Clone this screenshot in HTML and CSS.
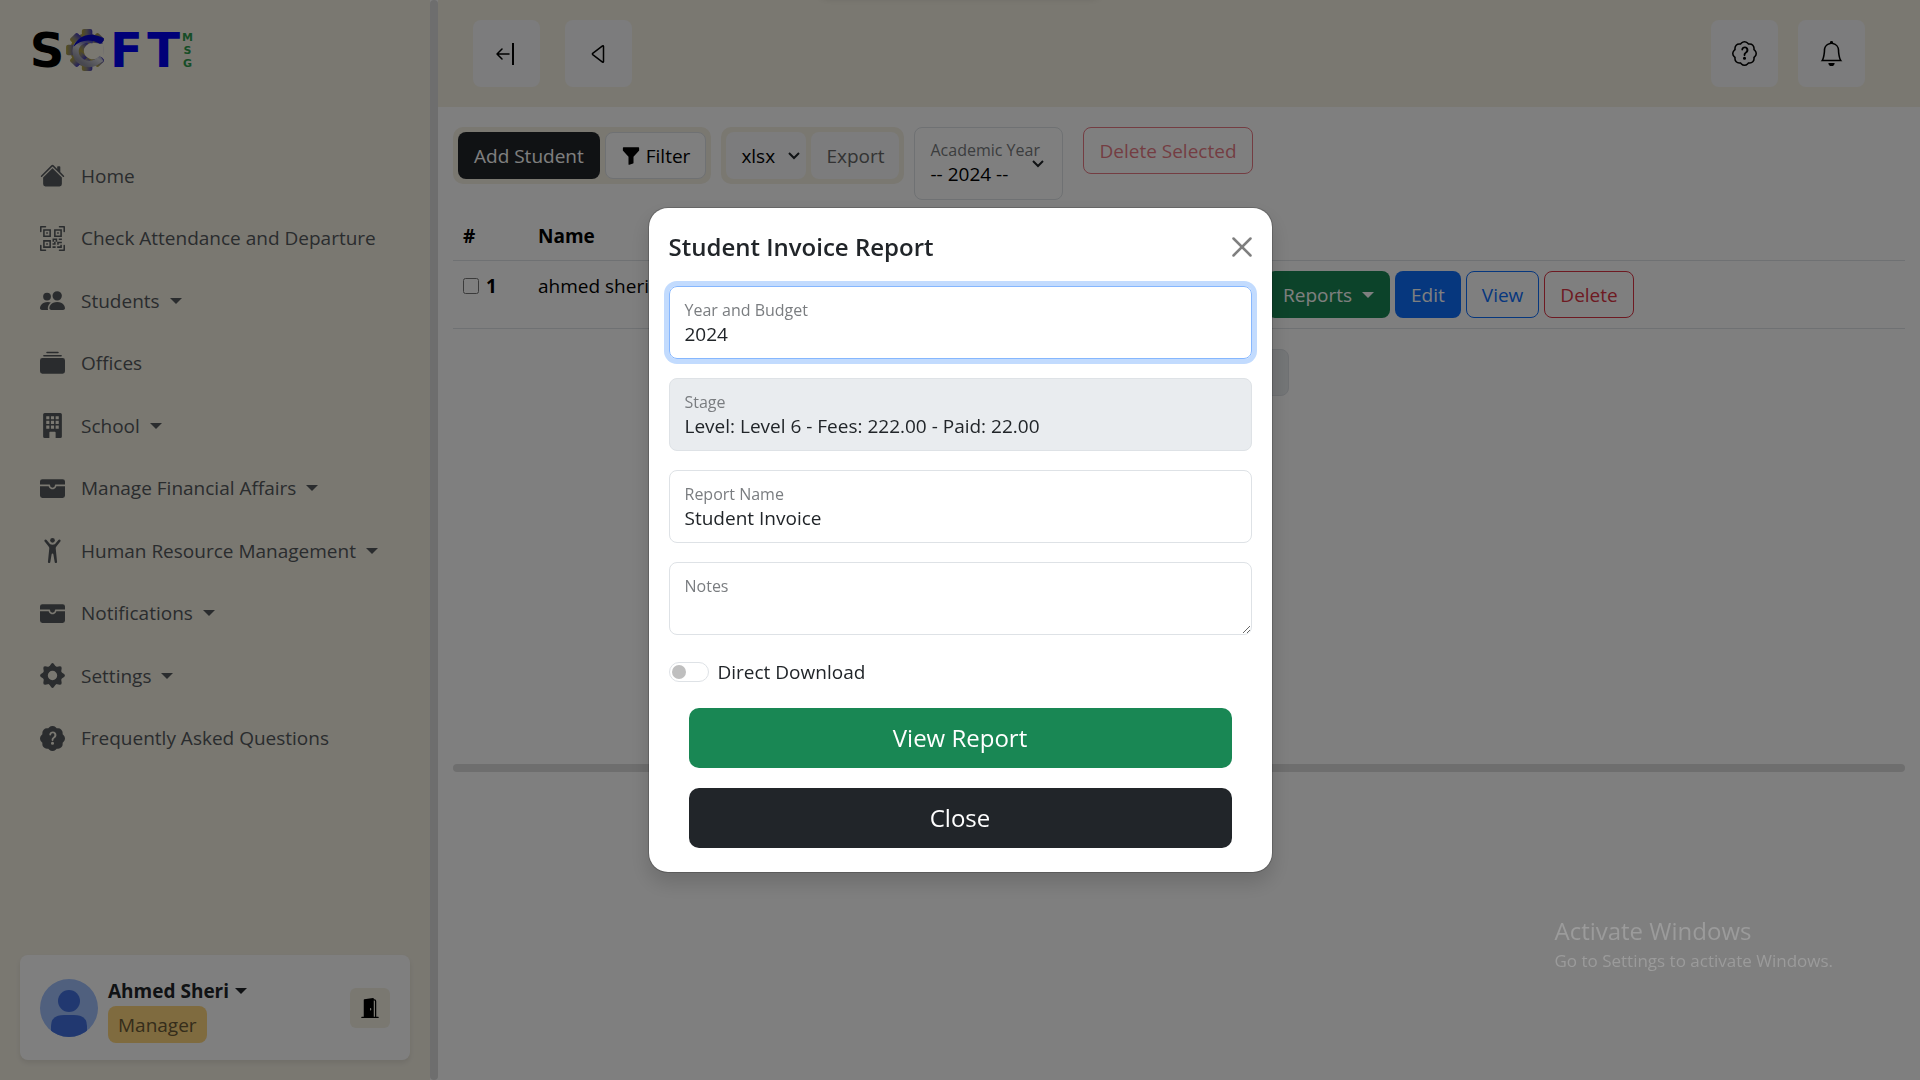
FILE: index.html
```html
<!DOCTYPE html>
<html lang="en">
<head>
<meta charset="utf-8">
<meta name="viewport" content="width=device-width, initial-scale=1">
<title>Students</title>
<link rel="stylesheet" href="styles.css">
</head>
<body>
<svg class="sprite" aria-hidden="true">
  <symbol id="house" viewBox="0 0 16 16"><path d="M8.707 1.5a1 1 0 0 0-1.414 0L.646 8.146a.5.5 0 0 0 .708.708L8 2.207l6.646 6.647a.5.5 0 0 0 .708-.708L13 5.793V2.5a.5.5 0 0 0-.5-.5h-1a.5.5 0 0 0-.5.5v1.293z"/><path d="m8 3.293 6 6V13.5a1.5 1.5 0 0 1-1.5 1.5h-9A1.5 1.5 0 0 1 2 13.5V9.293z"/></symbol>
  <symbol id="qr" viewBox="0 0 16 16"><path d="M0 .5A.5.5 0 0 1 .5 0h3a.5.5 0 0 1 0 1H1v2.5a.5.5 0 0 1-1 0zm12 0a.5.5 0 0 1 .5-.5h3a.5.5 0 0 1 .5.5v3a.5.5 0 0 1-1 0V1h-2.5a.5.5 0 0 1-.5-.5M.5 12a.5.5 0 0 1 .5.5V15h2.5a.5.5 0 0 1 0 1h-3a.5.5 0 0 1-.5-.5v-3a.5.5 0 0 1 .5-.5m15 0a.5.5 0 0 1 .5.5v3a.5.5 0 0 1-.5.5h-3a.5.5 0 0 1 0-1H15v-2.5a.5.5 0 0 1 .5-.5M4 4h1v1H4z"/><path d="M7 2H2v5h5zM3 3h3v3H3zm2 8H4v1h1z"/><path d="M7 9H2v5h5zm-4 1h3v3H3zm8-6h1v1h-1z"/><path d="M9 2h5v5H9zm1 1v3h3V3zM8 8v2h1v1H8v1h2v-2h1v2h1v-1h2v-1h-3V8zm2 2H9V9h1zm4 2h-1v1h-2v1h3zm-4 2v-1H8v1z"/><path d="M12 9h2V8h-2z"/></symbol>
  <symbol id="people" viewBox="0 0 16 16"><path d="M7 14s-1 0-1-1 1-4 5-4 5 3 5 4-1 1-1 1H7Zm4-6a3 3 0 1 0 0-6 3 3 0 0 0 0 6Zm-5.784 6A2.238 2.238 0 0 1 5 13c0-1.355.68-2.75 1.936-3.72A6.325 6.325 0 0 0 5 9c-4 0-5 3-5 4s1 1 1 1h4.216ZM4.5 8a2.5 2.5 0 1 0 0-5 2.5 2.5 0 0 0 0 5Z"/></symbol>
  <symbol id="collection" viewBox="0 0 16 16"><path d="M0 13a1.5 1.5 0 0 0 1.5 1.5h13A1.5 1.5 0 0 0 16 13V6a1.5 1.5 0 0 0-1.5-1.5h-13A1.5 1.5 0 0 0 0 6zM2 3a.5.5 0 0 0 .5.5h11a.5.5 0 0 0 0-1h-11A.5.5 0 0 0 2 3m2-2a.5.5 0 0 0 .5.5h7a.5.5 0 0 0 0-1h-7A.5.5 0 0 0 4 1"/></symbol>
  <symbol id="building" viewBox="0 0 16 16"><path fill-rule="evenodd" d="M3 0a1 1 0 0 0-1 1v14a1 1 0 0 0 1 1h3v-3.5a.5.5 0 0 1 .5-.5h3a.5.5 0 0 1 .5.5V16h3a1 1 0 0 0 1-1V1a1 1 0 0 0-1-1zM4 2h2v2H4zM7 2h2v2H7zM10 2h2v2h-2zM4 5h2v2H4zM7 5h2v2H7zM10 5h2v2h-2zM4 8h2v2H4zM7 8h2v2H7zM10 8h2v2h-2z"/></symbol>
  <symbol id="wallet" viewBox="0 0 16 16"><path d="M1.5 2A1.5 1.5 0 0 0 0 3.5v2h6a.5.5 0 0 1 .5.5c0 .253.08.644.306.958.207.288.557.542 1.194.542s.987-.254 1.194-.542C9.42 6.644 9.5 6.253 9.5 6a.5.5 0 0 1 .5-.5h6v-2A1.5 1.5 0 0 0 14.5 2z"/><path d="M16 6.5h-5.551a2.7 2.7 0 0 1-.443 1.042C9.613 8.088 8.963 8.5 8 8.5s-1.613-.412-2.006-.958A2.7 2.7 0 0 1 5.551 6.5H0v6A1.5 1.5 0 0 0 1.5 14h13a1.5 1.5 0 0 0 1.5-1.5z"/></symbol>
  <symbol id="person" viewBox="0 0 16 16"><path d="M8 3a1.5 1.5 0 1 0 0-3 1.5 1.5 0 0 0 0 3"/><path d="m5.93 6.704-.847 8.451a.768.768 0 0 0 1.523.203l.81-4.865a.59.59 0 0 1 1.165 0l.81 4.865a.768.768 0 0 0 1.523-.203l-.845-8.451A1.5 1.5 0 0 1 10.5 5.5L13 2.284a.796.796 0 0 0-1.239-.998L9.634 3.84a.7.7 0 0 1-.33.235c-.23.074-.665.176-1.304.176-.64 0-1.074-.102-1.305-.176a.7.7 0 0 1-.329-.235L4.239 1.286a.796.796 0 0 0-1.24.998l2.5 3.216c.317.316.475.758.43 1.204Z"/></symbol>
  <symbol id="gear" viewBox="0 0 16 16"><circle cx="8" cy="8" r="4.6" fill="none" stroke="currentColor" stroke-width="3.2"/><path d="M5.700 2.500 7.100.600Q8-.500 8.900.600L10.300 2.500zM5.700 13.500 7.100 15.400Q8 16.500 8.900 15.400L10.300 13.500z"/><path d="M5.700 2.500 7.100.600Q8-.500 8.900.600L10.300 2.500zM5.700 13.500 7.100 15.400Q8 16.500 8.900 15.400L10.300 13.500z" transform="rotate(90 8 8)"/><path d="M5.700 2.500 7.100.600Q8-.500 8.900.600L10.300 2.500zM5.700 13.500 7.100 15.400Q8 16.500 8.900 15.400L10.300 13.500z" transform="rotate(45 8 8)"/><path d="M5.700 2.500 7.100.600Q8-.500 8.900.600L10.300 2.500zM5.700 13.500 7.100 15.400Q8 16.500 8.900 15.400L10.300 13.500z" transform="rotate(135 8 8)"/></symbol>
  <symbol id="patch" viewBox="0 0 16 16"><path d="M5.933.87a2.89 2.89 0 0 1 4.134 0l.622.638.89-.011a2.89 2.89 0 0 1 2.924 2.924l-.01.89.636.622a2.89 2.89 0 0 1 0 4.134l-.637.622.011.89a2.89 2.89 0 0 1-2.924 2.924l-.89-.01-.622.636a2.89 2.89 0 0 1-4.134 0l-.622-.637-.89.011a2.89 2.89 0 0 1-2.924-2.924l.01-.89-.636-.622a2.89 2.89 0 0 1 0-4.134l.637-.622-.011-.89a2.89 2.89 0 0 1 2.924-2.924l.89.01zM7.002 11a1 1 0 1 0 2 0 1 1 0 0 0-2 0m1.602-2.027c.04-.534.198-.815.846-1.26.674-.475 1.05-1.09 1.05-1.986 0-1.325-.92-2.227-2.262-2.227-1.02 0-1.792.492-2.1 1.29A1.7 1.7 0 0 0 6 5.48c0 .393.203.64.545.64.272 0 .455-.147.564-.51.158-.592.525-.915 1.074-.915.61 0 1.03.446 1.03 1.11 0 .563-.208.885-.822 1.325-.619.433-.926.914-.926 1.64v.111c0 .428.208.745.585.745.336 0 .504-.24.554-.627"/></symbol>
  <symbol id="patch-line" viewBox="0 0 16 16"><path transform="translate(.5 .5) scale(.9375)" fill="none" stroke="currentColor" stroke-width="1.05" d="M5.933.87a2.89 2.89 0 0 1 4.134 0l.622.638.89-.011a2.89 2.89 0 0 1 2.924 2.924l-.01.89.636.622a2.89 2.89 0 0 1 0 4.134l-.637.622.011.89a2.89 2.89 0 0 1-2.924 2.924l-.89-.01-.622.636a2.89 2.89 0 0 1-4.134 0l-.622-.637-.89.011a2.89 2.89 0 0 1-2.924-2.924l.01-.89-.636-.622a2.89 2.89 0 0 1 0-4.134l.637-.622-.011-.89a2.89 2.89 0 0 1 2.924-2.924l.89.01z"/><path d="M7.002 11a1 1 0 1 0 2 0 1 1 0 0 0-2 0m1.602-2.027c.04-.534.198-.815.846-1.26.674-.475 1.05-1.09 1.05-1.986 0-1.325-.92-2.227-2.262-2.227-1.02 0-1.792.492-2.1 1.29A1.7 1.7 0 0 0 6 5.48c0 .393.203.64.545.64.272 0 .455-.147.564-.51.158-.592.525-.915 1.074-.915.61 0 1.03.446 1.03 1.11 0 .563-.208.885-.822 1.325-.619.433-.926.914-.926 1.64v.111c0 .428.208.745.585.745.336 0 .504-.24.554-.627"/></symbol>
  <symbol id="bell" viewBox="0 0 16 16"><path d="M8 16a2 2 0 0 0 2-2H6a2 2 0 0 0 2 2M8 1.918l-.797.161A4 4 0 0 0 4 6c0 .628-.134 2.197-.459 3.742-.16.767-.376 1.566-.663 2.258h10.244c-.287-.692-.502-1.49-.663-2.258C12.134 8.197 12 6.628 12 6a4 4 0 0 0-3.203-3.92zM14.22 12c.223.447.481.801.78 1H1c.299-.199.557-.553.78-1C2.68 10.2 3 6.88 3 6c0-2.42 1.72-4.44 4.005-4.901a1 1 0 1 1 1.99 0A5 5 0 0 1 13 6c0 .88.32 4.2 1.22 6"/></symbol>
  <symbol id="door" viewBox="0 0 16 16"><path d="M1.500 15a.5.5 0 0 0 0 1h13a.5.5 0 0 0 0-1H13V2.500A1.500 1.500 0 0 0 11.500 1H11V.5a.5.5 0 0 0-.57-.495l-7 1A.5.5 0 0 0 3 1.500V15zM11 2h.5a.5.5 0 0 1 .5.5V15h-1zm-2.500 8c-.276 0-.5-.448-.5-1s.224-1 .5-1 .5.448.5 1-.224 1-.5 1"/></symbol>
  <symbol id="funnel" viewBox="0 0 16 16"><path d="M1.500 1.500A.5.5 0 0 1 2 1h12a.5.5 0 0 1 .5.5v2a.5.5 0 0 1-.128.334L10 8.692V13.500a.5.5 0 0 1-.342.474l-3 1A.5.5 0 0 1 6 14.500V8.692L1.628 3.834A.5.5 0 0 1 1.500 3.500z"/></symbol>
  <symbol id="chevron" viewBox="0 0 12 8"><path fill="none" stroke="currentColor" stroke-width="2" d="m1 1 5 5 5-5"/></symbol>
</svg>

<div class="app">
  <aside class="sidebar">
    <a class="logo" href="#" aria-label="SCFT MSG">
      <span class="logo-s">S</span>
      <svg class="logo-gear" viewBox="0 0 36 40">
        <defs><linearGradient id="gg" x1="0" y1="0" x2="1" y2="0"><stop offset="0" stop-color="#b0a038"/><stop offset=".45" stop-color="#8a8480"/><stop offset="1" stop-color="#4038b8"/></linearGradient>
        <linearGradient id="cg" x1="1" y1="0" x2=".3" y2="1"><stop offset="0" stop-color="#1010c8"/><stop offset=".4" stop-color="#8080b8"/><stop offset=".6" stop-color="#d0d0d6"/><stop offset="1" stop-color="#9090a0"/></linearGradient></defs>
        <g fill="url(#gg)"><circle cx="20" cy="20" r="16"/><rect x="15" y="0" width="10" height="40" rx="2"/><rect x="15" y="1" width="10" height="38" rx="2" transform="rotate(45 20 20)"/><rect x="15" y="1" width="10" height="38" rx="2" transform="rotate(-45 20 20)"/><rect x="0" y="15" width="10" height="10" rx="2"/></g>
        <path class="logo-hole" d="M36 14v13h-4q-5 3-10 1-6-3-5-9 2-5 8-6z"/>
        <path fill="none" stroke="url(#cg)" stroke-width="6" d="M26 11C18 8 9 13 9 21c0 9 10 15 19 11l6-4"/>
        <path fill="#0808c8" d="M7 17C11 6 24 2 36 9q-1 5-4 5C23 9 14 10 7 17z"/>
      </svg>
      <span class="logo-ft">F</span><span class="logo-ft">T</span>
      <span class="logo-msg"><span>M</span><span>S</span><span>G</span></span>
    </a>
    <nav>
      <ul class="menu">
        <li><a href="#"><svg class="ico"><use href="#house"/></svg>Home</a></li>
        <li><a href="#"><svg class="ico"><use href="#qr"/></svg>Check Attendance and Departure</a></li>
        <li><a href="#"><svg class="ico"><use href="#people"/></svg>Students<i class="caret"></i></a></li>
        <li><a href="#"><svg class="ico"><use href="#collection"/></svg>Offices</a></li>
        <li><a href="#"><svg class="ico"><use href="#building"/></svg>School<i class="caret"></i></a></li>
        <li><a href="#"><svg class="ico"><use href="#wallet"/></svg>Manage Financial Affairs<i class="caret"></i></a></li>
        <li><a href="#"><svg class="ico"><use href="#person"/></svg>Human Resource Management<i class="caret"></i></a></li>
        <li><a href="#"><svg class="ico"><use href="#wallet"/></svg>Notifications<i class="caret"></i></a></li>
        <li><a href="#"><svg class="ico"><use href="#gear"/></svg>Settings<i class="caret"></i></a></li>
        <li><a href="#"><svg class="ico"><use href="#patch"/></svg>Frequently Asked Questions</a></li>
      </ul>
    </nav>
    <div class="user">
      <svg class="avatar" viewBox="0 0 58 58" aria-hidden="true"><defs><clipPath id="av"><circle cx="29" cy="29" r="29"/></clipPath></defs><circle cx="29" cy="29" r="29" fill="#a0c0fc"/><g fill="#4271e0" clip-path="url(#av)"><circle cx="29" cy="22" r="11"/><path d="M11 58V47q0-11 13-11h10q13 0 13 11v11z"/></g></svg>
      <div class="user-info">
        <a class="user-name" href="#">Ahmed Sheri<i class="caret"></i></a>
        <span class="badge">Manager</span>
      </div>
      <button class="logout" type="button" aria-label="Log out"><svg><use href="#door"/></svg></button>
    </div>
  </aside>
  <div class="divider"></div>

  <div class="content">
    <header class="topbar">
      <button class="tile" type="button" aria-label="Collapse menu"><svg viewBox="0 0 22 22" width="22" height="22"><path fill="none" stroke="currentColor" stroke-width="1.500" stroke-linecap="round" stroke-linejoin="round" d="M13 11H1m5-5-5 5 5 5"/><path fill="none" stroke="currentColor" stroke-width="2" d="M17 0v22"/></svg></button>
      <button class="tile" type="button" aria-label="Back"><svg viewBox="0 0 16 20" width="16" height="20"><path fill="none" stroke="currentColor" stroke-width="1.500" stroke-linejoin="round" d="M12.500 2.300v15.400q-.2.900-1 .4L1.700 10.600q-.6-.6 0-1.200l9.800-7.500q.8-.5 1 .4z"/></svg></button>
      <span class="spacer"></span>
      <button class="tile" type="button" aria-label="Help"><svg class="ico"><use href="#patch-line"/></svg></button>
      <button class="tile" type="button" aria-label="Alerts"><svg class="ico"><use href="#bell"/></svg></button>
    </header>

    <main class="page">
      <div class="toolbar">
        <div class="group">
          <button class="btn dark" type="button">Add Student</button>
          <button class="btn light" type="button"><svg class="funnel"><use href="#funnel"/></svg>Filter</button>
        </div>
        <div class="group">
          <div class="format">
            <select aria-label="Export format"><option>xlsx</option></select>
            <svg class="chev"><use href="#chevron"/></svg>
          </div>
          <button class="btn export" type="button" disabled>Export</button>
        </div>
        <div class="year">
          <label for="year">Academic Year</label>
          <select id="year"><option>-- 2024 --</option></select>
          <svg class="chev"><use href="#chevron"/></svg>
        </div>
        <button class="btn red faded" type="button" disabled>Delete Selected</button>
      </div>

      <div class="table-wrap">
        <table class="table">
          <thead><tr><th class="num" scope="col">#</th><th scope="col">Name</th><th class="act"></th></tr></thead>
          <tbody><tr>
            <th class="num" scope="row"><span class="pick"><input type="checkbox" aria-label="Select ahmed sheri">1</span></th>
            <td>ahmed sheri</td>
            <td class="act"><div class="actions">
              <button class="btn green" type="button">Reports<i class="caret"></i></button>
              <button class="btn blue" type="button">Edit</button>
              <button class="btn outline-blue" type="button">View</button>
              <button class="btn red" type="button">Delete</button>
            </div></td>
          </tr></tbody>
        </table>
        <div class="pager"></div>
      </div>
      <div class="hscroll"></div>
    </main>
  </div>
</div>
<div class="toast-edge"></div>

<div class="backdrop">
  <form class="modal" role="dialog" aria-labelledby="modal-title">
    <div class="modal-head">
      <h1 id="modal-title">Student Invoice Report</h1>
      <button class="x" type="button" aria-label="Close dialog"><svg viewBox="0 0 20 20"><path fill="none" stroke="currentColor" stroke-width="2.500" stroke-linecap="round" d="m1.500 1.500 17 17M18.500 1.500l-17 17"/></svg></button>
    </div>
    <div class="fields">
      <div class="field active"><label for="budget">Year and Budget</label><input id="budget" type="text" value="2024"></div>
      <div class="field off"><label for="stage">Stage</label><input id="stage" type="text" value="Level: Level 6 - Fees: 222.00 - Paid: 22.00" disabled></div>
      <div class="field"><label for="report">Report Name</label><input id="report" type="text" value="Student Invoice"></div>
      <div class="field notes"><label for="notes">Notes</label><textarea id="notes"></textarea></div>
    </div>
    <div class="switch"><input id="direct" type="checkbox" role="switch"><label for="direct">Direct Download</label></div>
    <div class="modal-actions">
      <button class="big green" type="button">View Report</button>
      <button class="big dark" type="button">Close</button>
    </div>
  </form>
</div>

<div class="watermark"><p class="wm-title">Activate Windows</p><p>Go to Settings to activate Windows.</p></div>
</body>
</html>
```
FILE: styles.css
```css
:root {
  --sand: #f4f0e3;
  --ink: #212529;
  --line: #dee2e6;
  --green: #198754;
  --blue: #0d6efd;
  --red: #dc3545;
}

*, *::before, *::after { box-sizing: border-box; }

body {
  margin: 0;
  background: #fff;
  color: var(--ink);
  font: 19px/30px "Open Sans", "Noto Sans", sans-serif;
}

button, input, select, textarea { font: inherit; color: inherit; margin: 0; }
button { cursor: pointer; }
a { color: inherit; text-decoration: none; }
svg { fill: currentColor; flex: none; display: block; }

.sprite { position: absolute; width: 0; height: 0; }
.ico { width: 25px; height: 25px; }
.spacer { flex: 1; }

.caret {
  display: inline-block;
  border: 6px solid transparent;
  border-top-color: currentColor;
  border-bottom: 0;
  margin-left: 10px;
}

.app { display: flex; min-height: 100vh; }

/* Sidebar */
.sidebar {
  width: 430px;
  flex: none;
  display: flex;
  flex-direction: column;
  padding: 28px 20px 20px;
  background: var(--sand);
}
.divider { width: 8px; flex: none; border-radius: 4px; background: #dcdcdc; }

.logo {
  display: flex;
  align-items: center;
  height: 44px;
  margin: 0 8px 72px;
  font: bold 48px/44px "DejaVu Sans", sans-serif;
  text-align: center;
}
.logo-s { color: #000; width: 38px; }
.logo-gear { width: 38px; height: 42px; margin-right: 4px; }
.logo-hole { fill: var(--sand); }
.logo-ft { color: #0000f0; width: 37px; }
.logo-msg {
  display: grid;
  justify-items: center;
  width: 10px;
  font-size: 11px;
  line-height: 13px;
  color: #2c9a4c;
}

.menu {
  list-style: none;
  margin: 0;
  padding: 0 20px;
  display: grid;
  grid-auto-rows: 1fr;
  height: 625px;
  color: #55595c;
}
.menu li { display: flex; align-items: center; }
.menu a { display: flex; align-items: center; padding-top: 1px; }
.menu .ico { margin-right: 16px; }

.user {
  display: flex;
  align-items: center;
  gap: 10px;
  margin-top: auto;
  height: 105px;
  padding: 0 20px;
  border-radius: 8px;
  background: #fff;
  box-shadow: 0 3px 5px rgba(0, 0, 0, .08);
}
.avatar { width: 58px; height: 58px; }
.user-info { display: flex; flex-direction: column; align-items: flex-start; flex: 1; padding-top: 3px; }
.user-name { display: flex; align-items: center; font-weight: bold; }
.user-name .caret { margin-left: 6px; }
.badge {
  padding: 4px 10px 3px;
  border-radius: 8px;
  background: #ffd67e;
  color: #6a5a36;
}
.logout {
  display: grid;
  place-items: center;
  width: 40px;
  height: 40px;
  padding: 0;
  border: 0;
  border-radius: 6px;
  background: var(--sand);
  color: #000;
}
.logout svg { width: 20px; height: 20px; }

/* Top bar */
.content { flex: 1; min-width: 0; }
.topbar {
  display: flex;
  gap: 20px;
  height: 107px;
  padding: 20px 55px 20px 35px;
  background: var(--sand);
}
.tile {
  display: grid;
  place-items: center;
  width: 67px;
  height: 67px;
  padding: 0;
  border: 0;
  border-radius: 8px;
  background: #f8f9fa;
  color: #000;
}
.tile:first-child { margin-right: 5px; }
.toast-edge {
  position: fixed;
  top: -20px;
  left: 50%;
  width: 280px;
  height: 16px;
  transform: translateX(-50%);
  border-radius: 8px;
  box-shadow: 0 0 10px rgba(0, 0, 0, .25);
}

/* Toolbar */
.page { padding: 20px 15px; }
.toolbar { display: flex; align-items: flex-start; }
.group {
  display: flex;
  gap: 5px;
  padding: 5px;
  margin-right: 10px;
  border-radius: 10px;
  background: var(--sand);
}
.btn {
  display: flex;
  align-items: center;
  height: 47px;
  padding: 0 15px;
  border: 1px solid transparent;
  border-radius: 8px;
  background: none;
  white-space: nowrap;
}
.dark { background: var(--ink); color: #fff; }
.light { background: #fff; border-color: var(--line); color: #000; }
.green { background: var(--green); color: #fff; }
.blue { background: var(--blue); color: #fff; }
.outline-blue { border-color: var(--blue); color: var(--blue); }
.red { border-color: var(--red); color: var(--red); }
.faded { opacity: .65; }
.funnel { width: 20px; height: 20px; margin-right: 5px; }
.format {
  position: relative;
  width: 80px;
  border-radius: 8px;
  background: #f8f9fa;
}
.format select, .year select {
  appearance: none;
  display: block;
  width: 100%;
  border: 0;
  background: none;
  color: #000;
}
.format select { height: 47px; padding: 0 15px; }
.chev { position: absolute; width: 12px; height: 8px; right: 6px; top: 20px; }
.export { background: #f8f9fa; color: #666; padding: 0 14px; }
.year {
  position: relative;
  width: 149px;
  height: 73px;
  margin-right: 20px;
  padding: 12px 15px;
  border: 1px solid var(--line);
  border-radius: 8px;
}
.year label { display: block; font-size: 16px; line-height: 20px; color: #777a7d; }
.year select { height: 28px; padding: 0; line-height: 28px; }
.year .chev { right: 18px; top: 32px; }

/* Table */
.table-wrap { height: 553px; }
.table { width: 100%; margin-top: 11px; border-collapse: collapse; color: #000; }
.table th, .table td {
  padding: 10px 10px 9px;
  border-bottom: 1px solid var(--line);
  text-align: left;
  vertical-align: top;
}
.table .num { width: 75px; }
.table .act { width: 648px; }
.pick { display: flex; align-items: center; gap: 7px; }
.pick input { width: 16px; height: 16px; }
.actions { display: flex; gap: 5px; padding-bottom: 1px; }
.pager {
  width: 220px;
  height: 47px;
  margin: 20px auto 0;
  border: 1px solid var(--line);
  border-radius: 8px;
  background: #e9ecef;
}
.hscroll { height: 8px; border-radius: 4px; background: #dcdcdc; }

/* Dialog */
.backdrop {
  position: fixed;
  inset: 0;
  display: flex;
  align-items: center;
  justify-content: center;
  background: rgba(0, 0, 0, .5);
}
.modal {
  width: 625px;
  padding: 19px 20px 24px;
  border: 1px solid rgba(0, 0, 0, .18);
  border-radius: 20px;
  background: #fff;
  background-clip: padding-box;
  box-shadow: 0 10px 20px rgba(0, 0, 0, .15);
}
.modal-head { display: flex; align-items: center; justify-content: space-between; height: 40px; }
.modal-head h1 { margin: 0; font-size: 24px; line-height: 40px; font-weight: 600; }
.x { width: 20px; height: 20px; padding: 0; border: 0; background: none; color: #7f7f7f; }
.fields { display: grid; gap: 19px; margin-top: 19px; }
.field {
  height: 73px;
  padding: 12px 15px;
  border: 1px solid var(--line);
  border-radius: 8px;
}
.field label { display: block; font-size: 16px; line-height: 22px; color: #7a7d80; }
.field input, .field textarea {
  display: block;
  width: 100%;
  height: 26px;
  padding: 0;
  border: 0;
  outline: 0;
  background: none;
}
.field.active { border-color: #86b7fe; box-shadow: 0 0 0 5px #c2dbfe; }
.field.off { background: #e9ecef; }
.field.notes { padding: 12px 0 0 15px; }
.field.notes textarea { height: 37px; resize: vertical; }

.switch { display: flex; align-items: center; gap: 9px; margin-top: 22px; }
.switch input {
  appearance: none;
  width: 40px;
  height: 20px;
  padding: 2px;
  border: 1px solid var(--line);
  border-radius: 10px;
}
.switch input::before {
  content: "";
  display: block;
  width: 14px;
  height: 14px;
  border-radius: 50%;
  background: #bfbfbf;
}
.modal-actions { display: grid; gap: 20px; padding: 0 20px; margin-top: 21px; }
.big { height: 60px; border: 0; border-radius: 10px; font-size: 24px; }

.watermark {
  position: fixed;
  right: 87px;
  bottom: 104px;
  color: #9b9b9b;
  font-size: 17px;
}
.watermark p { margin: 0; }
.wm-title { font-size: 24px; }
```
